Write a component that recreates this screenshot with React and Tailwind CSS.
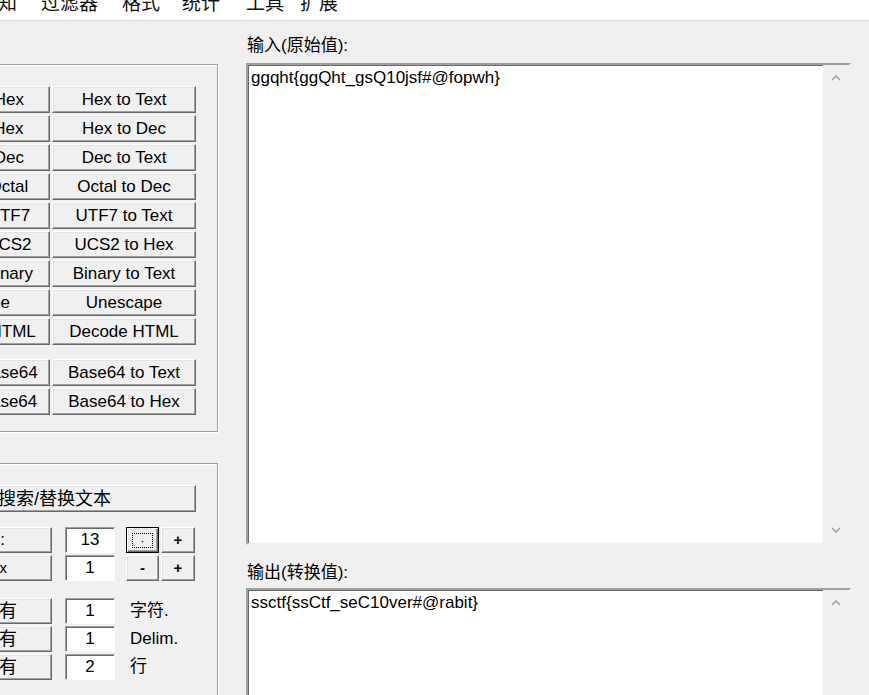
import React from "react";

const btn =
  "flex items-center justify-center bg-[#f0f0f0] border border-t-white border-l-white border-r-[#696969] border-b-[#696969] shadow-[inset_-1px_-1px_0_#a0a0a0,inset_1px_1px_0_#e3e3e3] whitespace-nowrap overflow-hidden";
const edit =
  "flex items-center justify-center bg-white border border-t-[#a0a0a0] border-l-[#a0a0a0] border-r-white border-b-white shadow-[inset_1px_1px_0_#696969]";

const rows = [
  ["Text to Hex", "Hex to Text"],
  ["Dec to Hex", "Hex to Dec"],
  ["Text to Dec", "Dec to Text"],
  ["Dec to Octal", "Octal to Dec"],
  ["Text to UTF7", "UTF7 to Text"],
  ["Text to UCS2", "UCS2 to Hex"],
  ["Text to Binary", "Binary to Text"],
  ["Escape", "Unescape"],
  ["Encode HTML", "Decode HTML"],
];
const rows2 = [
  ["Text to Base64", "Base64 to Text"],
  ["Hex to Base64", "Base64 to Hex"],
];

function Pair({ a, b }) {
  return (
    <div className="flex gap-[2px] h-[27px]">
      <div className={`${btn} w-[143px] pl-[6px]`}>{a}</div>
      <div className={`${btn} w-[144px]`}>{b}</div>
    </div>
  );
}

function Up() {
  return (
    <div className="h-[26px] flex items-center justify-center">
      <svg width="10" height="6" viewBox="0 0 10 6">
        <path d="M1 5 L5 1 L9 5" fill="none" stroke="#a0a0a0" strokeWidth="1.6" />
      </svg>
    </div>
  );
}

function Down() {
  return (
    <div className="h-[26px] flex items-center justify-center">
      <svg width="10" height="6" viewBox="0 0 10 6">
        <path d="M1 1 L5 5 L9 1" fill="none" stroke="#a0a0a0" strokeWidth="1.6" />
      </svg>
    </div>
  );
}

export default function App() {
  return (
    <div className="w-[869px] h-[695px] overflow-hidden bg-[#f0f0f0] flex flex-col text-black text-[17px] leading-[20px] font-['Liberation_Sans','Noto_Sans_CJK_SC',sans-serif]">
      {/* menu bar */}
      <div className="h-[21px] shrink-0 bg-white border-b border-[#dcdcdc] flex overflow-hidden text-[19px] leading-[19px] text-[#111]">
        <span className="mt-[-6px] ml-[-21px]">通知</span>
        <span className="mt-[-6px] ml-[24px]">过滤器</span>
        <span className="mt-[-6px] ml-[24px]">格式</span>
        <span className="mt-[-6px] ml-[22px]">统计</span>
        <span className="mt-[-6px] ml-[26px]">工具</span>
        <span className="mt-[-6px] ml-[16px]">扩展</span>
      </div>

      <div className="flex flex-1 min-h-0">
        {/* left column */}
        <div className="w-[246px] shrink-0 flex flex-col">
          <div className="mt-[43px] ml-[-110px] w-[328px] h-[368px] shrink-0 border border-[#a0a0a0] shadow-[inset_1px_1px_0_#fff,1px_1px_0_#fff] pl-[16px] pt-[21px] flex flex-col gap-[2px]">
            {rows.map(([a, b]) => (
              <Pair key={b} a={a} b={b} />
            ))}
            <div className="mt-[12px] flex flex-col gap-[2px]">
              {rows2.map(([a, b]) => (
                <Pair key={b} a={a} b={b} />
              ))}
            </div>
          </div>

          <div className="mt-[31px] ml-[-110px] w-[328px] h-[300px] shrink-0 border border-[#a0a0a0] shadow-[inset_1px_1px_0_#fff,1px_1px_0_#fff] pl-[16px] pt-[21px] flex flex-col">
            <div className={`${btn} w-[289px] h-[27px] text-[18px] pl-[6px]`}>搜索/替换文本</div>

            <div className="mt-[15px] flex flex-col gap-[2px]">
              <div className="flex h-[26px]">
                <div className={`${btn} w-[145px] !justify-end pr-[46px]`}>Find:</div>
                <div className={`${edit} ml-[13px] w-[50px]`}>13</div>
                <div className="ml-[11px] w-[33px] border border-black flex">
                  <div className={`${btn} flex-1`}>
                    <div className="w-[21px] h-[15px] border border-dotted border-black flex items-center justify-center text-[13px] leading-[13px]">·</div>
                  </div>
                </div>
                <div className={`${btn} ml-[2px] w-[34px] text-[15px] font-bold`}>+</div>
              </div>
              <div className="flex h-[26px]">
                <div className={`${btn} w-[145px] !justify-end pr-[44px] text-[15px]`}>Regex</div>
                <div className={`${edit} ml-[13px] w-[50px]`}>1</div>
                <div className={`${btn} ml-[11px] w-[33px] text-[15px] font-bold`}>-</div>
                <div className={`${btn} ml-[2px] w-[34px] text-[15px] font-bold`}>+</div>
              </div>
            </div>

            <div className="mt-[17px] flex flex-col gap-[2px]">
              {[
                ["1", "字符."],
                ["1", "Delim."],
                ["2", "行"],
              ].map(([v, l], i) => (
                <div key={i} className="flex h-[26px] items-stretch">
                  <div className={`${btn} w-[145px] !justify-end pr-[34px] text-[18px]`}>删除所有</div>
                  <div className={`${edit} ml-[13px] w-[50px]`}>{v}</div>
                  <div className="ml-[15px] flex items-center">{l}</div>
                </div>
              ))}
            </div>
          </div>
        </div>

        {/* right column */}
        <div className="flex-1 flex flex-col min-w-0">
          <div className="h-[42px] shrink-0 pt-[15px] pl-[1px]">输入(原始值):</div>
          <div className="w-[605px] h-[482px] shrink-0 bg-white border-2 border-t-[#a0a0a0] border-l-[#a0a0a0] border-r-[#f0f0f0] border-b-[#f0f0f0] shadow-[inset_1px_1px_0_#696969] flex">
            <div className="flex-1 pl-[3px] pt-[3px]">ggqht{"{"}ggQht_gsQ10jsf#@fopwh{"}"}</div>
            <div className="w-[26px] h-full bg-[#f0f0f0] flex flex-col justify-between shrink-0">
              <Up />
              <Down />
            </div>
          </div>
          <div className="h-[43px] shrink-0 pt-[18px] pl-[1px]">输出(转换值):</div>
          <div className="w-[605px] flex-1 bg-white border-2 border-b-0 border-t-[#a0a0a0] border-l-[#a0a0a0] border-r-[#f0f0f0] shadow-[inset_1px_1px_0_#696969] flex">
            <div className="flex-1 pl-[3px] pt-[3px]">ssctf{"{"}ssCtf_seC10ver#@rabit{"}"}</div>
            <div className="w-[26px] bg-[#f0f0f0] flex flex-col shrink-0">
              <Up />
            </div>
          </div>
        </div>
      </div>
    </div>
  );
}
